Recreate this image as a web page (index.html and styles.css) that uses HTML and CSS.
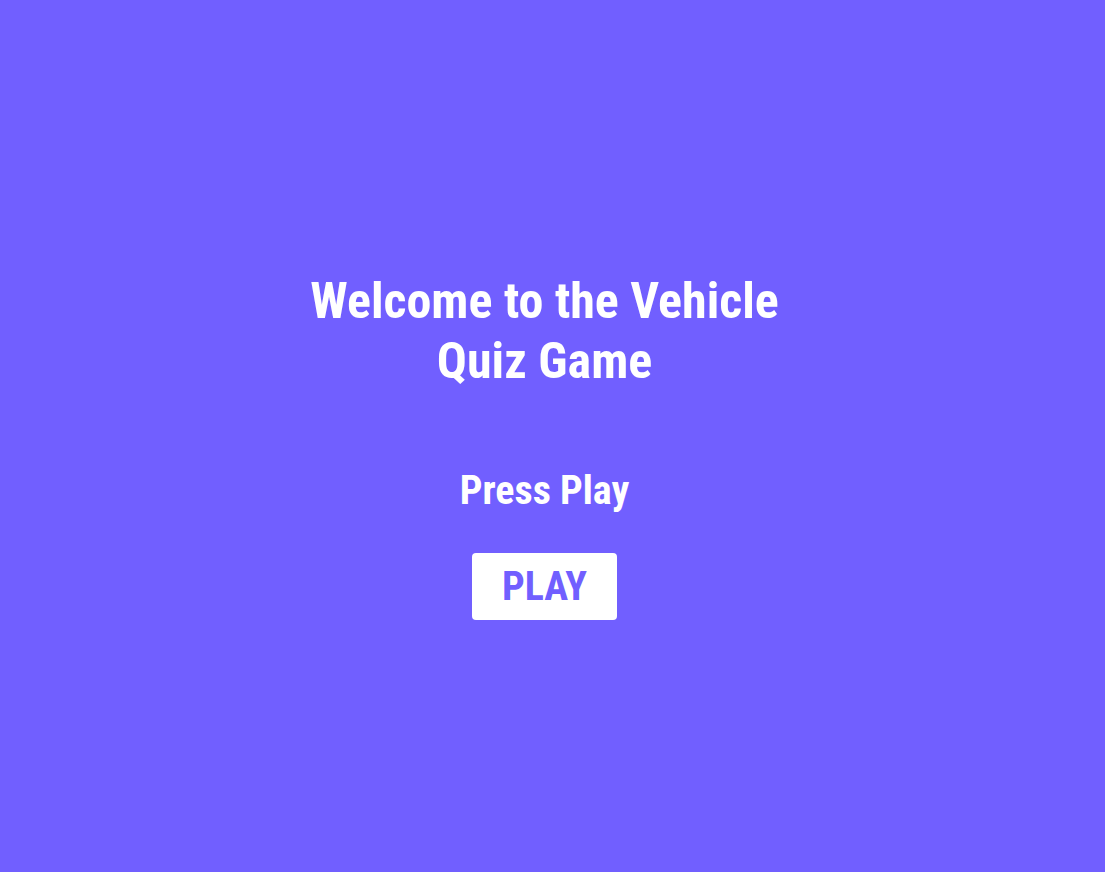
FILE: index.html
```html
<!DOCTYPE html>
<html>
<head>
<meta charset="utf-8">
<link rel="stylesheet" href="styles.css">
</head>
<body>
<main class="screen">
  <section class="welcome">
    <h1 class="title">Welcome to the Vehicle Quiz Game</h1>
    <h2 class="subtitle">Press Play</h2>
    <button class="play">PLAY</button>
  </section>
</main>
</body>
</html>
```
FILE: styles.css
```css
html, body {
  margin: 0;
  height: 100%;
  background: #715fff;
}
body {
  font-family: "Roboto Condensed", Roboto, "Liberation Sans", sans-serif;
  font-stretch: condensed;
  color: #fff;
}
.screen {
  height: 100%;
  display: flex;
  align-items: center;
  justify-content: center;
  padding: 18px 16px 0 0;
  box-sizing: border-box;
}
.welcome {
  display: flex;
  flex-direction: column;
  align-items: center;
  text-align: center;
}
.title {
  width: 500px;
  margin: 0;
  font-size: 50px;
  line-height: 60px;
  font-weight: 700;
}
.subtitle {
  margin: 76px 0 0;
  font-size: 40px;
  font-weight: 700;
  line-height: 47px;
}
.play {
  margin-top: 39px;
  width: 145px;
  height: 67px;
  border: none;
  border-radius: 4px;
  background: #fff;
  color: #715fff;
  font-family: inherit;
  font-stretch: condensed;
  font-size: 40px;
  font-weight: 700;
  padding: 0;
}
```
